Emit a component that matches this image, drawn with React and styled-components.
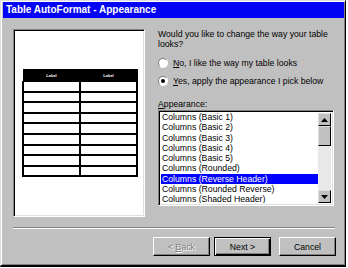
import React, { useState } from "react";
import styled, { createGlobalStyle } from "styled-components";

const GlobalStyle = createGlobalStyle`
  body {
    margin: 0;
    background: #ffffff;
    font-family: "Liberation Sans", Arial, sans-serif;
  }
`;

const items = [
  "Columns (Basic 1)",
  "Columns (Basic 2)",
  "Columns (Basic 3)",
  "Columns (Basic 4)",
  "Columns (Basic 5)",
  "Columns (Rounded)",
  "Columns (Reverse Header)",
  "Columns (Rounded Reverse)",
  "Columns (Shaded Header)",
];

const App = () => {
  const [choice, setChoice] = useState("yes");
  const [selected, setSelected] = useState(6);
  return (
    <>
      <GlobalStyle />
      <Window>
        <TitleBar>Table AutoFormat - Appearance</TitleBar>
        <Body>
          <Preview>
            <SampleTable>
              <thead>
                <tr>
                  <HeadCell>Label</HeadCell>
                  <HeadCell>Label</HeadCell>
                </tr>
              </thead>
              <tbody>
                {Array.from({ length: 9 }).map((_, i) => (
                  <tr key={i}>
                    <Cell />
                    <Cell />
                  </tr>
                ))}
              </tbody>
            </SampleTable>
          </Preview>
          <Side>
            <Question>Would you like to change the way your table looks?</Question>
            <Options>
              <Option onClick={() => setChoice("no")}>
                <Radio checked={choice === "no"} />
                <span>
                  <u>N</u>o, I like the way my table looks
                </span>
              </Option>
              <Option onClick={() => setChoice("yes")}>
                <Radio checked={choice === "yes"} />
                <span>
                  <u>Y</u>es, apply the appearance I pick below
                </span>
              </Option>
            </Options>
            <ListLabel>
              <u>A</u>ppearance:
            </ListLabel>
            <ListBox>
              <Items>
                {items.map((it, i) => (
                  <Item key={it} active={i === selected} onClick={() => setSelected(i)}>
                    {it}
                  </Item>
                ))}
              </Items>
              <ScrollBar>
                <ArrowBtn>
                  <Arrow viewBox="0 0 7 4">
                    <path d="M3.5 0 L7 4 L0 4 Z" fill="#000" />
                  </Arrow>
                </ArrowBtn>
                <Thumb />
                <Track />
                <ArrowBtn>
                  <Arrow viewBox="0 0 7 4">
                    <path d="M0 0 L7 0 L3.5 4 Z" fill="#000" />
                  </Arrow>
                </ArrowBtn>
              </ScrollBar>
            </ListBox>
          </Side>
        </Body>
        <Separator />
        <Buttons>
          <Button disabled>
            &lt; <u>B</u>ack
          </Button>
          <Button primary>Next &gt;</Button>
          <CancelButton>Cancel</CancelButton>
        </Buttons>
      </Window>
    </>
  );
};

const Window = styled.div`
  box-sizing: border-box;
  width: 346px;
  height: 267px;
  background: #c0c0c0;
  border-top: 1px solid #dfdfdf;
  border-left: 1px solid #dfdfdf;
  border-right: 1px solid #000;
  border-bottom: 2px solid #000;
  box-shadow: inset 1px 1px 0 #ffffff, inset -1px -1px 0 #808080;
  display: flex;
  flex-direction: column;
  font-size: 8.7px;
  color: #000;
`;

const TitleBar = styled.div`
  height: 16px;
  margin: 1px 1px 0 2px;
  background: #0404f4;
  color: #fff;
  font-weight: bold;
  font-size: 10px;
  line-height: 16px;
  padding-left: 3px;
  white-space: nowrap;
`;

const Body = styled.div`
  display: flex;
  padding: 11px 0 0 12px;
  gap: 13px;
`;

const Preview = styled.div`
  box-sizing: border-box;
  width: 132px;
  height: 188px;
  background: #fff;
  border-top: 1px solid #808080;
  border-left: 1px solid #808080;
  border-right: 1px solid #fff;
  border-bottom: 1px solid #fff;
  box-shadow: inset 1px 1px 0 #000, inset -1px -1px 0 #dfdfdf;
  padding: 39px 0 0 8px;
`;

const SampleTable = styled.table`
  width: 116px;
  border-collapse: collapse;
  table-layout: fixed;
`;

const HeadCell = styled.th`
  background: #000;
  color: #fff;
  font-size: 4px;
  font-weight: bold;
  height: 11px;
  padding: 0;
  border: 1px solid #000;
`;

const Cell = styled.td`
  height: 8.6px;
  padding: 0;
  border: 2px solid #000;
  border-top: 0;
`;

const Side = styled.div`
  display: flex;
  flex-direction: column;
  width: 176px;
`;

const Question = styled.div`
  line-height: 10px;
  width: 182px;
`;

const Options = styled.div`
  display: flex;
  flex-direction: column;
  gap: 7px;
  margin-top: 8px;
`;

const Option = styled.label`
  display: flex;
  align-items: center;
  gap: 5px;
  height: 11px;
  cursor: default;
`;

const Radio = styled.span`
  box-sizing: border-box;
  width: 10px;
  height: 10px;
  border-radius: 50%;
  background: #fff;
  border: 1px solid;
  border-color: #808080 #fff #fff #808080;
  position: relative;
  flex-shrink: 0;
  &::after {
    content: "";
    position: absolute;
    left: 2px;
    top: 2px;
    width: 4px;
    height: 4px;
    border-radius: 50%;
    background: #000;
    display: ${(p) => (p.checked ? "block" : "none")};
  }
`;

const ListLabel = styled.div`
  margin-top: 13px;
  line-height: 10px;
`;

const ListBox = styled.div`
  box-sizing: border-box;
  margin-top: 1px;
  width: 176px;
  height: 96px;
  background: #fff;
  border-top: 1px solid #808080;
  border-left: 1px solid #808080;
  border-right: 1px solid #fff;
  border-bottom: 1px solid #fff;
  box-shadow: inset 1px 1px 0 #000, inset -1px -1px 0 #dfdfdf;
  padding: 1px 2px 2px 2px;
  display: flex;
`;

const Items = styled.div`
  flex: 1;
  overflow: hidden;
`;

const Item = styled.div`
  line-height: 10.3px;
  height: 10.3px;
  padding-left: 1px;
  white-space: nowrap;
  background: ${(p) => (p.active ? "#0000ff" : "transparent")};
  color: ${(p) => (p.active ? "#fff" : "#000")};
`;

const ScrollBar = styled.div`
  width: 13px;
  margin-top: 1px;
  display: flex;
  flex-direction: column;
  background: #e8e8e8;
`;

const ArrowBtn = styled.div`
  box-sizing: border-box;
  height: 13px;
  background: #c0c0c0;
  border: 1px solid;
  border-color: #dfdfdf #000 #000 #dfdfdf;
  display: flex;
  align-items: center;
  justify-content: center;
`;

const Arrow = styled.svg`
  width: 7px;
  height: 4px;
`;

const Thumb = styled(ArrowBtn)`
  height: 20px;
`;

const Track = styled.div`
  flex: 1;
`;

const Separator = styled.div`
  margin: 10px 10px 0 12px;
  height: 1px;
  background: #808080;
  border-bottom: 1px solid #fff;
`;

const Buttons = styled.div`
  display: flex;
  justify-content: flex-end;
  gap: 4px;
  padding: 8px 9px 0 0;
`;

const Button = styled.button`
  box-sizing: border-box;
  width: 57px;
  height: 19px;
  font-family: inherit;
  font-size: 8.7px;
  padding: 0;
  background: #c0c0c0;
  color: ${(p) => (p.disabled ? "#808080" : "#000")};
  text-shadow: ${(p) => (p.disabled ? "1px 1px 0 #fff" : "none")};
  border: 1px solid;
  border-color: ${(p) => (p.primary ? "#000" : "#fff #000 #000 #fff")};
  box-shadow: ${(p) =>
    p.primary
      ? "inset 1px 1px 0 #fff, inset -1px -1px 0 #000, inset -2px -2px 0 #808080"
      : "inset -1px -1px 0 #808080"};
`;

const CancelButton = styled(Button)`
  margin-left: 4px;
`;

export default App;
